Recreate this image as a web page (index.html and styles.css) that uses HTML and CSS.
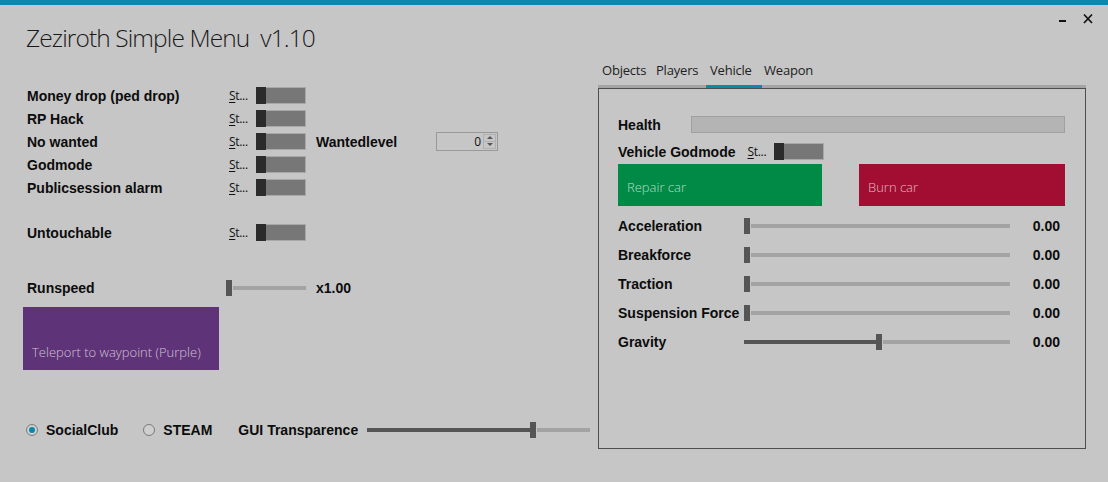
FILE: index.html
```html
<!DOCTYPE html>
<html>
<head>
<meta charset="utf-8">
<link rel="stylesheet" href="styles.css">
</head>
<body>
<div class="app">
  <div class="topbar"></div>
  <header class="header">
    <h1 class="title">Zeziroth Simple Menu&nbsp; v1.10</h1>
    <div class="winctl">
      <svg class="ctl" width="12" height="12" viewBox="0 0 12 12"><rect x="2" y="7" width="7" height="2" fill="#111"/></svg>
      <svg class="ctl" width="12" height="12" viewBox="0 0 12 12"><path d="M2 1.5 L10 10 M10 1.5 L2 10" stroke="#111" stroke-width="1.7"/></svg>
    </div>
  </header>
  <main class="main">
    <section class="left">
      <div class="toggles">
        <div class="trow"><span class="lbl">Money drop (ped drop)</span><span class="st"><u>S</u>t...</span><span class="toggle"><i></i></span></div>
        <div class="trow"><span class="lbl">RP Hack</span><span class="st"><u>S</u>t...</span><span class="toggle"><i></i></span></div>
        <div class="trow"><span class="lbl">No wanted</span><span class="st"><u>S</u>t...</span><span class="toggle"><i></i></span>
          <span class="lbl wl">Wantedlevel</span>
          <span class="num"><span class="numval">0</span><span class="spin"><span class="up"></span><span class="down"></span></span></span>
        </div>
        <div class="trow"><span class="lbl">Godmode</span><span class="st"><u>S</u>t...</span><span class="toggle"><i></i></span></div>
        <div class="trow"><span class="lbl">Publicsession alarm</span><span class="st"><u>S</u>t...</span><span class="toggle"><i></i></span></div>
        <div class="trow gap"><span class="lbl">Untouchable</span><span class="st"><u>S</u>t...</span><span class="toggle"><i></i></span></div>
      </div>
      <div class="runrow">
        <span class="lbl runlbl">Runspeed</span>
        <span class="slider small"><span class="fill" style="width:0px"></span><span class="thumb"></span><span class="rest"></span></span>
        <span class="lbl runval">x1.00</span>
      </div>
      <button class="tile purple">Teleport to waypoint (Purple)</button>
      <div class="bottom">
        <label class="radio"><span class="dot on"></span><span class="lbl">SocialClub</span></label>
        <label class="radio steam"><span class="dot"></span><span class="lbl">STEAM</span></label>
        <span class="lbl gui">GUI Transparence</span>
        <span class="slider gslider"><span class="fill" style="width:163px"></span><span class="thumb"></span><span class="rest"></span></span>
      </div>
    </section>
    <section class="right">
      <nav class="tabs">
        <span class="tab">Objects</span>
        <span class="tab">Players</span>
        <span class="tab active">Vehicle</span>
        <span class="tab last">Weapon</span>
      </nav>
      <div class="panel">
        <div class="prow health"><span class="lbl plbl">Health</span><span class="hbar"></span></div>
        <div class="prow vg"><span class="lbl">Vehicle Godmode</span><span class="st vst"><u>S</u>t...</span><span class="toggle"><i></i></span></div>
        <div class="btns">
          <button class="tile green">Repair car</button>
          <button class="tile red">Burn car</button>
        </div>
        <div class="srows">
          <div class="srow"><span class="lbl slbl">Acceleration</span><span class="slider wide"><span class="fill" style="width:0px"></span><span class="thumb"></span><span class="rest"></span></span><span class="lbl sval">0.00</span></div>
          <div class="srow"><span class="lbl slbl">Breakforce</span><span class="slider wide"><span class="fill" style="width:0px"></span><span class="thumb"></span><span class="rest"></span></span><span class="lbl sval">0.00</span></div>
          <div class="srow"><span class="lbl slbl">Traction</span><span class="slider wide"><span class="fill" style="width:0px"></span><span class="thumb"></span><span class="rest"></span></span><span class="lbl sval">0.00</span></div>
          <div class="srow"><span class="lbl slbl">Suspension Force</span><span class="slider wide"><span class="fill" style="width:0px"></span><span class="thumb"></span><span class="rest"></span></span><span class="lbl sval">0.00</span></div>
          <div class="srow"><span class="lbl slbl">Gravity</span><span class="slider wide"><span class="fill" style="width:132px"></span><span class="thumb"></span><span class="rest"></span></span><span class="lbl sval">0.00</span></div>
        </div>
      </div>
    </section>
  </main>
</div>
</body>
</html>
```

FILE: styles.css
```css
* { box-sizing: border-box; }
html, body { margin: 0; padding: 0; }
body {
  width: 1108px;
  height: 482px;
  background: #c6c6c6;
  overflow: hidden;
  font-family: "Open Sans", "Noto Sans", sans-serif;
  color: #111;
}
.app { width: 1108px; height: 482px; display: flex; flex-direction: column; }
.topbar { height: 5px; background: #0a88ad; flex: none; }
.header {
  height: 55px;
  display: flex;
  justify-content: space-between;
  align-items: flex-start;
  padding: 0 14px 0 26px;
  flex: none;
}
.title {
  margin: 17px 0 0 0;
  font-family: "Open Sans", sans-serif;
  font-weight: 300;
  font-size: 24.5px;
  line-height: 32px;
  letter-spacing: -0.9px;
  color: #1a1a1a;
}
.winctl { display: flex; gap: 13px; padding-top: 8px; }
.ctl { display: block; }

.main { display: flex; flex: 1; }
.lbl {
  font-family: "Liberation Sans", Arial, sans-serif;
  font-weight: bold;
  font-size: 14px;
  color: #0c0c0c;
  white-space: nowrap;
}
.left { width: 598px; padding-left: 23px; padding-top: 24px; flex: none; }
.toggles { display: flex; flex-direction: column; }
.trow { display: flex; align-items: center; height: 23px; padding-left: 4px; }
.trow.gap { margin-top: 22px; }
.trow .lbl:first-child { width: 202px; }
.st {
  font-family: "Open Sans", sans-serif;
  font-size: 12px;
  width: 27px;
  color: #111;
  letter-spacing: -0.3px;
}
.st u { text-decoration: underline; text-underline-offset: 2px; }
.toggle {
  width: 50px; height: 17px;
  border: 1px solid #a8a8a8;
  background: #777;
  display: flex;
  position: relative;
}
.toggle i {
  display: block;
  width: 10px;
  margin: -1px 0 -1px -1px;
  background: #2b2b2b;
}
.wl { margin-left: 10px; width: 120px; }
.num {
  width: 62px; height: 19px;
  border: 1px solid #999;
  display: flex;
  align-items: center;
  justify-content: flex-end;
}
.numval { font-family: "Open Sans", sans-serif; font-size: 12px; margin-right: 2px; }
.spin { display: flex; flex-direction: column; width: 13px; height: 15px; margin-right: 1px; border: 1px solid #b0b0b0; }
.spin span { flex: 1; position: relative; }
.spin .up { border-bottom: 1px solid #b0b0b0; }
.spin .up::after, .spin .down::after {
  content: ""; position: absolute; left: 3px; top: 1px;
  border-left: 3px solid transparent; border-right: 3px solid transparent;
}
.spin .up::after { border-bottom: 3px solid #555; }
.spin .down::after { border-top: 3px solid #555; }

.runrow { display: flex; align-items: center; height: 23px; margin-top: 32px; padding-left: 4px; }
.runlbl { width: 199px; }
.runval { margin-left: 10px; }

.slider { display: flex; align-items: center; height: 16px; }
.slider .fill { height: 4px; background: #555; }
.slider .thumb { width: 6px; height: 16px; background: #555; flex: none; }
.slider .rest { flex: 1; height: 4px; background: #a3a3a3; margin-left: 1px; }
.slider.small { width: 80px; }
.slider.wide { width: 266px; }
.gslider { width: 223px; margin-left: 9px; }

.tile {
  display: flex;
  align-items: flex-end;
  border: none;
  margin: 0;
  font-family: "Open Sans", sans-serif;
  font-weight: 300;
  font-size: 13px;
  color: rgba(255,255,255,0.7);
  text-align: left;
  cursor: pointer;
}
.purple {
  width: 196px; height: 63px;
  background: #5f3377;
  margin-top: 8px;
  padding: 0 0 9px 9px;
}
.bottom { display: flex; align-items: center; height: 20px; margin-top: 50px; padding-left: 3px; }
.radio { display: flex; align-items: center; }
.dot {
  width: 12px; height: 12px; border-radius: 50%;
  border: 1px solid #7a7a7a;
  background: #cfcfcf;
  position: relative;
  margin-right: 8px;
}
.dot.on::after {
  content: ""; position: absolute; left: 2px; top: 2px;
  width: 6px; height: 6px; border-radius: 50%; background: #0a88ad;
}
.radio .lbl { font-size: 14px; }
.steam { margin-left: 25px; }
.gui { margin-left: 26px; }

.right { width: 488px; flex: none; }
.tabs {
  display: flex;
  height: 28px;
  border-bottom: 3px solid #a5a5a5;
  align-items: stretch;
}
.tab {
  font-family: "Open Sans", sans-serif;
  font-size: 13px;
  color: #222;
  width: 54px;
  padding: 0 0 5px 4px;
  margin-bottom: -3px;
  border-bottom: 3px solid transparent;
  display: flex;
  align-items: center;
  white-space: nowrap;
  letter-spacing: -0.2px;
}
.tab.active { border-bottom-color: #0a88ad; width: 56px; }
.tab.last { padding-left: 2px; width: 70px; }
.panel {
  height: 361px;
  border: 1px solid #4e4e4e;
  padding: 27px 19px 0 19px;
}
.prow { display: flex; align-items: center; height: 17px; }
.plbl { width: 73px; }
.hbar { width: 374px; height: 17px; background: #b4b4b4; border: 1px solid #a0a0a0; }
.vg { margin-top: 10px; }
.vst { margin-left: 12px; }
.btns { display: flex; justify-content: space-between; margin-top: 4px; width: 447px; }
.green { width: 204px; height: 42px; background: #008a46; padding: 0 0 10px 9px; }
.red { width: 206px; height: 42px; background: #a10e32; padding: 0 0 10px 9px; }
.srows { margin-top: 5px; display: flex; flex-direction: column; }
.srow { display: flex; align-items: center; height: 29px; }
.slbl { width: 126px; }
.sval { width: 50px; text-align: right; }
```
